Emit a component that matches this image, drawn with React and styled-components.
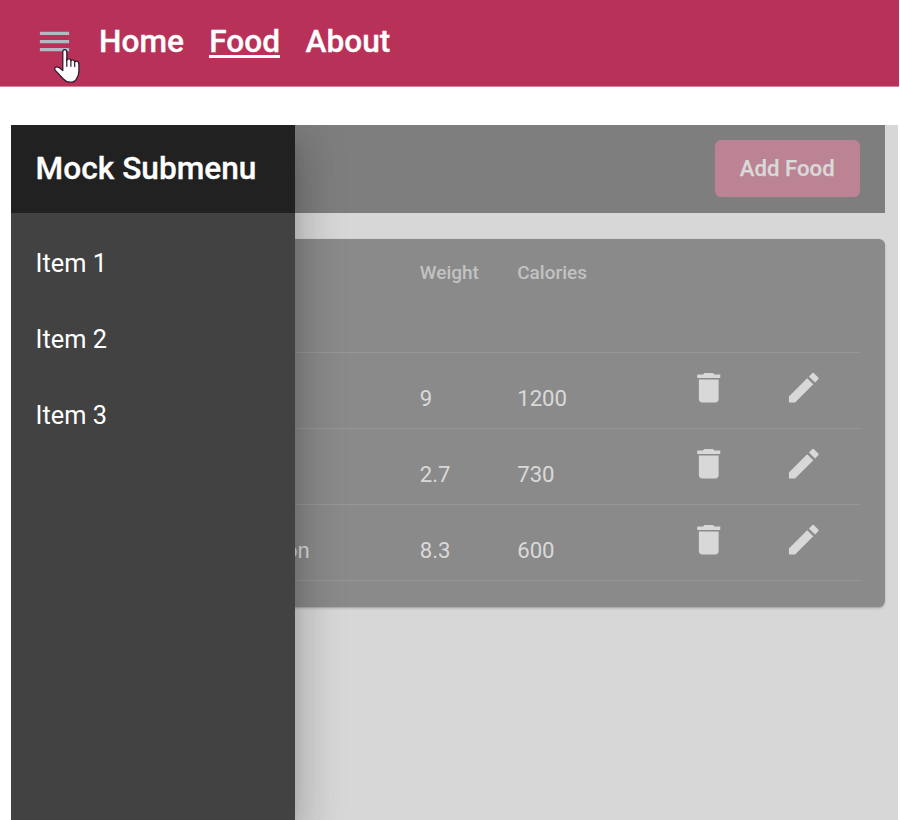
import React from "react";
import styled, { createGlobalStyle } from "styled-components";
import { MdDelete, MdEdit, MdMenu } from "react-icons/md";

const GlobalStyle = createGlobalStyle`
  * { box-sizing: border-box; }
  body { margin: 0; background: #fff; font-family: Roboto, sans-serif; overflow: hidden; }
`;

const Page = styled.div`
  height: 820px;
  width: 900px;
  display: flex;
  flex-direction: column;
  overflow: hidden;
`;

const NavBar = styled.header`
  position: relative;
  flex: none;
  width: 899px;
  height: 87px;
  padding: 0 0 3px 35px;
  display: flex;
  align-items: center;
  background: #b73159;
  border-bottom: 1px solid #d5839b;
`;

const MenuButton = styled.button`
  display: flex;
  padding: 0;
  border: 0;
  margin-right: 25px;
  background: none;
  color: #afbac3;
  font-size: 39px;
`;

const NavLinks = styled.nav`
  display: flex;
  gap: 25.3px;
`;

const NavLink = styled.a`
  color: #fff;
  font-size: 31.67px;
  font-weight: 500;
  line-height: 37px;
  height: 33px;
  margin-bottom: 1px;
  display: flex;
  align-items: center;
  -webkit-text-stroke: 0.3px #fff;
  box-shadow: ${(p) => (p.$active ? "inset 0 -3px #fff" : "none")};
`;

const Cursor = styled.svg`
  position: absolute;
  left: 52px;
  top: 48px;
`;

const Container = styled.div`
  position: relative;
  flex: 1;
  margin: 37.5px 2px 0 10.5px;
  overflow: hidden;
  background: #d7d7d7;
`;

const Drawer = styled.aside`
  position: absolute;
  inset: 0 auto 0 0;
  width: 284.6px;
  background: #424242;
  color: #fff;
  box-shadow: 0 13px 16px -8px rgba(0, 0, 0, 0.2),
    0 25px 38px 3px rgba(0, 0, 0, 0.14), 0 9px 47px 8px rgba(0, 0, 0, 0.12);
`;

const DrawerHeader = styled.h2`
  margin: 0 0 12.7px;
  height: 88.5px;
  padding-left: 25.1px;
  display: flex;
  align-items: center;
  background: #212121;
  font-size: 31.67px;
  font-weight: 500;
  -webkit-text-stroke: 0.3px #fff;
`;

const DrawerItem = styled.div`
  height: 76px;
  padding-left: 25.1px;
  display: flex;
  align-items: center;
  font-size: 25.33px;
`;

const Content = styled.main`
  width: 874.7px;
`;

const Toolbar = styled.div`
  height: 88.5px;
  padding-right: 25.3px;
  display: flex;
  align-items: center;
  justify-content: flex-end;
  background: #7e7e7e;
`;

const AddButton = styled.button`
  width: 145.3px;
  height: 57px;
  padding: 0 0 2px;
  border: 0;
  border-radius: 6.3px;
  background: #bb8393;
  color: #d9d9d9;
  font: 500 22.17px Roboto, sans-serif;
  -webkit-text-stroke: 0.25px #d9d9d9;
`;

const Card = styled.section`
  margin-top: 25.5px;
  height: 368.5px;
  padding: 0 25.3px;
  border-radius: 6.3px;
  background: #8a8a8a;
  box-shadow: 0 3px 2px -2px rgba(0, 0, 0, 0.16), 0 1px 3px rgba(0, 0, 0, 0.14);
`;

const Row = styled.div`
  display: grid;
  grid-template-columns: 384px 97.4px 171.4px 95px 1fr;
  height: ${(p) => (p.$header ? 114.3 : 76)}px;
  padding-top: ${(p) => (p.$header ? 22.4 : 0)}px;
  border-bottom: 1.6px solid #979797;
`;

const HeaderCell = styled.div`
  color: #c2c2c2;
  font-size: 19px;
  font-weight: 500;
  line-height: 24px;
`;

const Cell = styled.div`
  padding-top: 32px;
  color: #d9d9d9;
  font-size: 22.17px;
  line-height: 26px;
`;

const NameCell = styled(Cell)`
  width: 274px;
  text-align: right;
`;

const IconButton = styled.button`
  justify-self: start;
  align-self: start;
  display: flex;
  margin: 15px 0 0;
  padding: 0;
  border: 0;
  background: none;
  color: #d8d8d8;
  font-size: 39.5px;
`;

const foods = [
  { name: "", weight: "9", calories: "1200" },
  { name: "", weight: "2.7", calories: "730" },
  { name: "on", weight: "8.3", calories: "600" },
];

function HandCursor() {
  return (
    <Cursor width="30" height="37" viewBox="0 0 30 37" aria-hidden="true">
      <path
        d="M10.8 22.5V4Q10.8 1.7 12.7 1.7T14.8 4v8.4q.3-1.6 2-1.6 1.9 0 2.1 2 .4-1 1.8-1 1.7 0 2 2.1.4-.8 1.7-.8 2.3 0 2.5 3v7.2q0 3.8-2.2 7.1-1.6 3.8-6.4 3.8-4.2 0-6.7-3L3.3 22.4q-1.2-2.1-.2-2.9 1.5-1.2 4 .1Z"
        fill="#fff" stroke="#30172b" strokeWidth="1.25" strokeLinejoin="round"
      />
      <path d="M14.8 11.5v6.8M18.9 12.8v5.5M22.7 13.9v4.7" fill="none" stroke="#30172b" strokeWidth="1.2" strokeLinecap="round" />
    </Cursor>
  );
}

export default function App() {
  return (
    <Page>
      <GlobalStyle />
      <NavBar>
        <MenuButton aria-label="Menu"><MdMenu /></MenuButton>
        <NavLinks>
          <NavLink>Home</NavLink>
          <NavLink $active>Food</NavLink>
          <NavLink>About</NavLink>
        </NavLinks>
        <HandCursor />
      </NavBar>
      <Container>
        <Content>
          <Toolbar><AddButton>Add Food</AddButton></Toolbar>
          <Card>
            <Row $header>
              <HeaderCell />
              <HeaderCell>Weight</HeaderCell>
              <HeaderCell>Calories</HeaderCell>
            </Row>
            {foods.map((food) => (
              <Row key={food.calories}>
                <NameCell>{food.name}</NameCell>
                <Cell>{food.weight}</Cell>
                <Cell>{food.calories}</Cell>
                <IconButton aria-label="Delete"><MdDelete /></IconButton>
                <IconButton aria-label="Edit"><MdEdit /></IconButton>
              </Row>
            ))}
          </Card>
        </Content>
        <Drawer>
          <DrawerHeader>Mock Submenu</DrawerHeader>
          <DrawerItem>Item 1</DrawerItem>
          <DrawerItem>Item 2</DrawerItem>
          <DrawerItem>Item 3</DrawerItem>
        </Drawer>
      </Container>
    </Page>
  );
}
